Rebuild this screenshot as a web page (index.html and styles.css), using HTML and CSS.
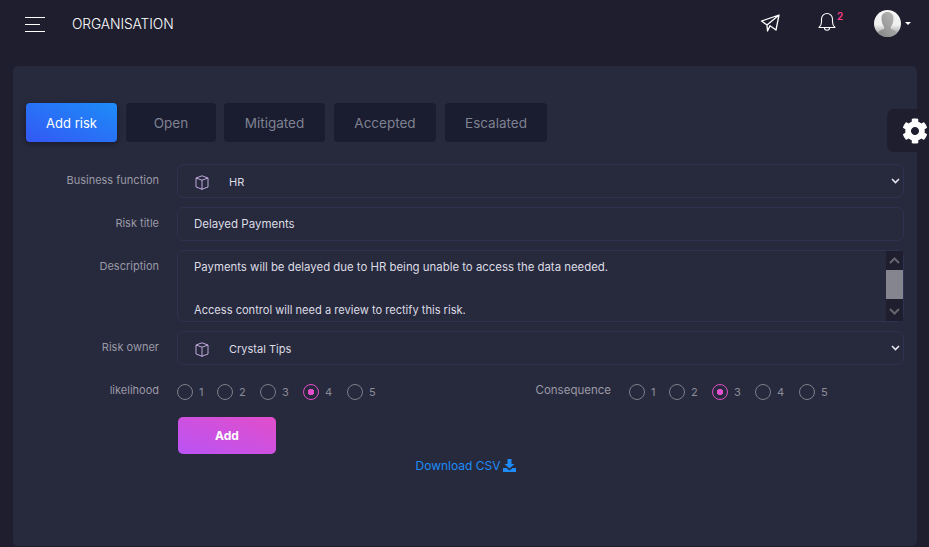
FILE: index.html
```html
<!DOCTYPE html>
<html lang="en">
<head>
<meta charset="utf-8">
<title>Organisation risks</title>
<link rel="stylesheet" href="styles.css">
</head>
<body>
<header class="topbar">
  <div class="brand">
    <svg class="menu" width="20" height="15" viewBox="0 0 20 15"><path d="M0 .5h20M0 7.500h15M0 14.500h20" stroke="#fff" stroke-width="1" fill="none"/></svg>
    <span class="brand-name">ORGANISATION</span>
  </div>
  <div class="actions">
    <svg class="send" width="20" height="18" viewBox="0 0 20 18" fill="none" stroke="#fff" stroke-width="1.300" stroke-linejoin="round"><path d="M19 1 1.500 7l5.500 4L19 1l-3 15-6-4.300L7.500 17 7 11"/></svg>
    <div class="bell">
      <svg width="18" height="20" viewBox="0 0 18 20" fill="none" stroke="#fff" stroke-width="1.100" stroke-linejoin="round"><path d="M1 15.500c1.800-1.500 2.500-3 2.500-5.500V7a5.500 5.500 0 0 1 11 0v3c0 2.500.7 4 2.500 5.500z"/><path d="M6.500 16c0 3 5 3 5 0"/></svg>
      <span class="badge">2</span>
    </div>
    <div class="user">
      <svg class="avatar" width="27" height="27" viewBox="0 0 27 27"><defs><linearGradient id="av" x1="0" y1="0" x2="0" y2="1"><stop offset="0" stop-color="#f6f6f6"/><stop offset=".55" stop-color="#f0f0f0"/><stop offset="1" stop-color="#8a8a8a"/></linearGradient><linearGradient id="avh" x1="1" y1="0" x2="0" y2="1"><stop offset="0" stop-color="#bcbcbc"/><stop offset="1" stop-color="#858585"/></linearGradient><clipPath id="avc"><circle cx="13.500" cy="13.500" r="13.500"/></clipPath></defs><circle cx="13.500" cy="13.500" r="13.500" fill="url(#av)"/><g clip-path="url(#avc)"><path d="M3.500 27c0-5 1.500-6.500 6.500-8 .6-1.500 0-2.500-1-4-1-2-1.500-4-1.500-7 0-3.500 2.500-6 6-6s6 2.500 6 6c0 3-.5 5-1.500 7-1 1.500-1.600 2.500-1 4 5 1.500 6.500 3 6.500 8z" fill="url(#avh)"/></g></svg>
      <span class="caret"></span>
    </div>
  </div>
</header>

<main class="card">
  <nav class="tabs">
    <button class="tab tab-active">Add risk</button>
    <button class="tab tab-open">Open</button>
    <button class="tab tab-mitigated">Mitigated</button>
    <button class="tab tab-accepted">Accepted</button>
    <button class="tab tab-escalated">Escalated</button>
  </nav>

  <form class="form">
    <div class="row">
      <label class="label">Business function</label>
      <div class="control select">
        <svg class="cube" width="14" height="15" viewBox="0 0 14 15" fill="none" stroke="#bfa8dc" stroke-width="1"><path d="M7 .8l6 2.200v9l-6 2.200L1 12V3zM1 3l6 2.200L13 3M7 5.200v10"/></svg>
        <span class="value">HR</span>
        <svg class="chev" width="9" height="6" viewBox="0 0 9 6" fill="none" stroke="#e6e6ee" stroke-width="1.600"><path d="M1 1l3.500 3.500L8 1"/></svg>
      </div>
    </div>
    <div class="row">
      <label class="label">Risk title</label>
      <div class="control text">Delayed Payments</div>
    </div>
    <div class="row">
      <label class="label">Description</label>
      <div class="control area">
        <div class="area-text">
          <p class="line-long">Payments will be delayed due to HR being unable to access the data needed.</p>
          <p class="line-short">Access control will need a review to rectify this risk.</p>
        </div>
        <div class="scroll">
          <svg class="scroll-btn" width="17" height="19" viewBox="0 0 17 19" fill="none" stroke="#66666f" stroke-width="2"><path d="M4 12l4.500-4.500L13 12"/></svg>
          <div class="thumb"></div>
          <svg class="scroll-btn" width="17" height="19" viewBox="0 0 17 19" fill="none" stroke="#66666f" stroke-width="2"><path d="M4 7l4.500 4.500L13 7"/></svg>
        </div>
      </div>
    </div>
    <div class="row">
      <label class="label">Risk owner</label>
      <div class="control select">
        <svg class="cube" width="14" height="15" viewBox="0 0 14 15" fill="none" stroke="#bfa8dc" stroke-width="1"><path d="M7 .8l6 2.200v9l-6 2.200L1 12V3zM1 3l6 2.200L13 3M7 5.200v10"/></svg>
        <span class="value">Crystal Tips</span>
        <svg class="chev" width="9" height="6" viewBox="0 0 9 6" fill="none" stroke="#e6e6ee" stroke-width="1.600"><path d="M1 1l3.500 3.500L8 1"/></svg>
      </div>
    </div>
    <div class="row row-radios">
      <div class="half">
        <label class="label">likelihood</label>
        <div class="radios">
          <span class="radio"><i class="dot"></i>1</span>
          <span class="radio"><i class="dot"></i>2</span>
          <span class="radio"><i class="dot"></i>3</span>
          <span class="radio on"><i class="dot"></i>4</span>
          <span class="radio"><i class="dot"></i>5</span>
        </div>
      </div>
      <div class="half">
        <label class="label label-wide">Consequence</label>
        <div class="radios">
          <span class="radio"><i class="dot"></i>1</span>
          <span class="radio"><i class="dot"></i>2</span>
          <span class="radio on"><i class="dot"></i>3</span>
          <span class="radio"><i class="dot"></i>4</span>
          <span class="radio"><i class="dot"></i>5</span>
        </div>
      </div>
    </div>
    <button class="add" type="button">Add</button>
  </form>
  <a class="download">Download CSV <svg width="13" height="13" viewBox="0 0 13 13" fill="#1d8cf8"><path d="M4.500 0h4v5h3L6.500 9.500 1.500 5h3zM0 9h3.500l3 2.500 3-2.500H13v4H0z"/></svg></a>
</main>

<aside class="settings">
  <svg width="26" height="26" viewBox="0 0 512 512"><path fill="#fff" d="M487.400 315.700l-42.600-24.600c4.300-23.200 4.300-47 0-70.200l42.600-24.600c4.900-2.800 7.100-8.600 5.500-14-11.100-35.600-30-67.800-54.700-94.600-3.800-4.100-10-5.100-14.800-2.300L380.800 110c-17.900-15.400-38.500-27.300-60.800-35.100V25.800c0-5.600-3.900-10.500-9.400-11.700-36.700-8.200-74.300-7.800-109.200 0-5.500 1.200-9.400 6.100-9.400 11.700V75c-22.200 7.900-42.800 19.800-60.800 35.100L88.700 85.500c-4.900-2.800-11-1.900-14.800 2.300-24.700 26.700-43.600 58.900-54.700 94.600-1.700 5.400.6 11.200 5.500 14L67.300 221c-4.300 23.200-4.300 47 0 70.200l-42.600 24.600c-4.900 2.800-7.100 8.600-5.500 14 11.100 35.600 30 67.800 54.700 94.600 3.800 4.100 10 5.100 14.800 2.300l42.600-24.600c17.900 15.400 38.500 27.300 60.800 35.100v49.200c0 5.600 3.900 10.500 9.400 11.700 36.700 8.200 74.300 7.800 109.200 0 5.500-1.200 9.400-6.100 9.400-11.700v-49.200c22.200-7.900 42.800-19.800 60.800-35.100l42.600 24.600c4.900 2.800 11 1.900 14.800-2.300 24.700-26.700 43.600-58.900 54.700-94.600 1.500-5.500-.7-11.300-5.600-14.100zM256 336c-44.100 0-80-35.900-80-80s35.900-80 80-80 80 35.900 80 80-35.900 80-80 80z"/></svg>
</aside>
</body>
</html>
```
FILE: styles.css
```css
* { box-sizing: border-box; }
html, body { height: 100%; }
body {
  margin: 0;
  background: #1e1e2e;
  font-family: "Inter", "Open Sans", sans-serif;
  overflow: hidden;
  position: relative;
}
.topbar {
  height: 66px;
  display: flex;
  justify-content: space-between;
  align-items: flex-start;
  padding: 0 18px 0 25px;
}
.brand { display: flex; align-items: center; height: 47px; }
.menu { display: block; margin-top: 1px; }
.brand-name { margin-left: 27px; color: #fff; font-size: 13.800px; font-weight: 300; letter-spacing: -.1px; }
.actions { display: flex; align-items: flex-start; }
.send { margin-top: 14px; }
.bell { position: relative; margin: 12px 0 0 38px; width: 18px; }
.badge { position: absolute; left: 19px; top: -2px; font-size: 10px; font-weight: 600; color: #fd3d8a; }
.user { display: flex; align-items: center; margin: 10px 0 0 38px; }
.caret { margin-left: 4px; border: 3px solid transparent; border-top-color: #fff; border-bottom: 0; }
.card {
  margin: 0 12px 0 13px;
  height: 480px;
  background: #27293d;
  border-radius: 5px;
  padding: 37px 13px 0;
}
.tabs { display: flex; gap: 9px; }
.tab {
  height: 39px;
  border: 0;
  border-radius: 4px;
  background: #1a1c30;
  color: #7f8291;
  font: 13.500px "Inter", sans-serif;
  padding: 0;
}
.tab-active {
  width: 91px;
  color: #fff;
  font-size: 13px;
  background: linear-gradient(to top right, #3358f4, #1d8cf8);
  box-shadow: 0 2px 6px rgba(0, 0, 0, .35);
}
.tab-open { width: 90px; margin-right: -1px; }
.tab-mitigated { width: 101px; }
.tab-accepted { width: 102px; }
.tab-escalated { width: 102px; }
.form { margin-top: 22px; display: flex; flex-direction: column; gap: 9px; }
.row { display: flex; align-items: flex-start; }
.label {
  width: 133px;
  flex: none;
  text-align: right;
  font-size: 11px;
  color: #9a9aa6;
  line-height: 16px;
  margin-top: 8px;
}
.label-wide { font-size: 11.500px; }
.control {
  margin-left: 18px;
  width: 727px;
  border: 1px solid #2f3352;
  border-radius: 7px;
  color: #dcdce4;
  font-size: 11.500px;
}
.select { height: 34px; display: flex; align-items: center; padding: 2px 3px 0 17px; }
.value { margin-left: 20px; flex: 1; font-size: 11px; }
.chev { margin-top: -3px; }
.text { height: 34px; padding: 0 16px; line-height: 33px; }
.area { height: 72px; display: flex; justify-content: space-between; }
.area-text { padding: 9px 16px; line-height: 15px; }
.area-text p { margin: 0 0 28px; }
.line-long { font-size: 11.400px; }
.line-short { font-size: 11.100px; }
.scroll { width: 17px; background: #1e1e2e; display: flex; flex-direction: column; }
.scroll-btn { display: block; flex: none; }
.thumb { height: 29px; background: #84858f; }
.scroll-btn:last-child { margin-top: auto; }
.row-radios { margin-top: 8px; }
.half { display: flex; align-items: flex-start; width: 452px; flex: none; }
.half .label { margin-top: 0; }
.radios { display: flex; gap: 14px; height: 20px; align-items: center; margin-left: 18px; }
.radio { display: flex; align-items: center; color: #8c8d99; font-size: 11px; width: 29px; }
.radio:first-child { width: 26px; }
.radio:nth-child(4) { width: 30px; }
.dot {
  width: 16px;
  height: 16px;
  margin-right: 6px;
  border-radius: 50%;
  border: 1px solid #7d7e88;
  flex: none;
}
.on .dot {
  border-color: #e14eca;
  background: radial-gradient(circle, #e14eca 0 3px, transparent 3.500px);
}
.add {
  margin: 6px 0 0 152px;
  width: 98px;
  height: 37px;
  border: 0;
  border-radius: 5px;
  background: linear-gradient(to top right, #ba54f5, #e14eca);
  color: #fff;
  font: 700 12px "Inter", sans-serif;
}
.download {
  display: flex;
  justify-content: center;
  align-items: center;
  gap: 3px;
  margin: 4px 0 0 10px;
  width: 860px;
  color: #1d8cf8;
  font-size: 12px;
}
.settings {
  position: absolute;
  left: 887px;
  top: 109px;
  width: 42px;
  height: 43px;
  background: #1e1e2e;
  border-radius: 7px 0 0 7px;
  padding: 9px 0 0 15px;
}
```
